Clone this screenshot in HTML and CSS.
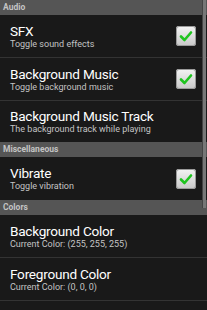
FILE: index.html
```html
<!DOCTYPE html>
<html lang="en">
<head>
<meta charset="UTF-8">
<meta name="viewport" content="width=device-width, initial-scale=1.0">
<title>Settings</title>
<link rel="stylesheet" href="styles.css">
</head>
<body>
<div class="prefs">
    <div class="category">Audio</div>
    <div class="pref">
        <div class="text">
            <div class="title">SFX</div>
            <div class="summary">Toggle sound effects</div>
        </div>
        <div class="check"><svg viewBox="0 0 20 20" width="20" height="20"><path d="M5 10.5l3.5 3.5 6.5-7.5" fill="none" stroke="#1fc41f" stroke-width="2.6" stroke-linecap="round" stroke-linejoin="round"/></svg></div>
    </div>
    <div class="pref">
        <div class="text">
            <div class="title">Background Music</div>
            <div class="summary">Toggle background music</div>
        </div>
        <div class="check"><svg viewBox="0 0 20 20" width="20" height="20"><path d="M5 10.5l3.5 3.5 6.5-7.5" fill="none" stroke="#1fc41f" stroke-width="2.6" stroke-linecap="round" stroke-linejoin="round"/></svg></div>
    </div>
    <div class="pref last short">
        <div class="text">
            <div class="title">Background Music Track</div>
            <div class="summary">The background track while playing</div>
        </div>
    </div>
    <div class="category">Miscellaneous</div>
    <div class="pref last">
        <div class="text">
            <div class="title">Vibrate</div>
            <div class="summary">Toggle vibration</div>
        </div>
        <div class="check"><svg viewBox="0 0 20 20" width="20" height="20"><path d="M5 10.5l3.5 3.5 6.5-7.5" fill="none" stroke="#1fc41f" stroke-width="2.6" stroke-linecap="round" stroke-linejoin="round"/></svg></div>
    </div>
    <div class="category">Colors</div>
    <div class="pref">
        <div class="text">
            <div class="title">Background Color</div>
            <div class="summary">Current Color: (255, 255, 255)</div>
        </div>
    </div>
    <div class="pref">
        <div class="text">
            <div class="title">Foreground Color</div>
            <div class="summary">Current Color: (0, 0, 0)</div>
        </div>
    </div>
</div>
<div class="scrollbar"></div>
</body>
</html>
```

FILE: styles.css
```css
body {
    margin: 0;
    background-color: #191919;
    font-family: 'Roboto', 'Open Sans', sans-serif;
    color: #fff;
    overflow: hidden;
}
.prefs {
    width: 207px;
}
.category {
    height: 15px;
    line-height: 15px;
    padding-left: 3px;
    background-color: #555;
    color: #c4c4c4;
    font-size: 8.5px;
    font-weight: bold;
}
.pref {
    display: flex;
    align-items: center;
    height: 42px;
    padding: 0 11px 0 10px;
    border-bottom: 1px solid #333;
}
.pref.last {
    border-bottom: none;
    height: 43px;
}
.pref.short {
    height: 41px;
}
.text {
    flex: 1;
}
.title {
    font-size: 13.6px;
    line-height: 16px;
    letter-spacing: -0.25px;
    color: #fff;
}
.summary {
    font-size: 9px;
    line-height: 11px;
    color: #c4c4c4;
}
.check {
    width: 20px;
    height: 20px;
    border-radius: 3px;
    background: linear-gradient(#f4f4f4, #c8c8c8);
    box-shadow: inset 0 0 0 1px #9a9a9a;
}
.check svg {
    display: block;
}
.scrollbar {
    position: absolute;
    top: 0;
    right: 1px;
    width: 3px;
    height: 208px;
    background-color: #777;
    border-left: 1px solid #444;
}
```
